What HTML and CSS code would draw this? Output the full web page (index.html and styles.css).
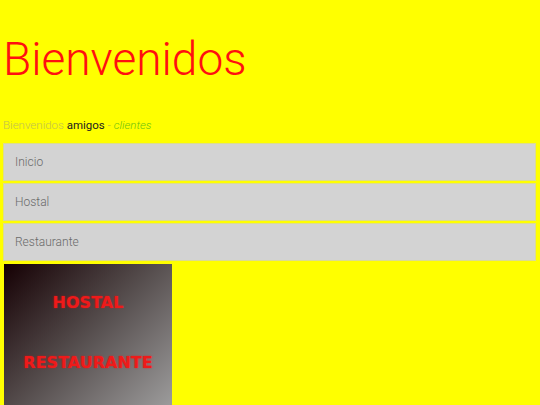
FILE: index.html
```html
<!DOCTYPE html>
<html>
<head>
<meta charset="utf-8">
<link rel="stylesheet" href="styles.css">
</head>
<body>
<header class="header">
  <h1 class="title">Bienvenidos</h1>
  <p class="subtitle"><span class="sub-a">Bienvenidos</span> <span class="sub-b">amigos</span> <span class="sub-c">-</span> <em class="sub-d">clientes</em></p>
</header>
<nav class="menu">
  <div class="menu-item">Inicio</div>
  <div class="menu-item">Hostal</div>
  <div class="menu-item">Restaurante</div>
</nav>
<section class="promo">
  <div class="promo-text">HOSTAL</div>
  <div class="promo-text">RESTAURANTE</div>
</section>
</body>
</html>
```
FILE: styles.css
```css
html, body {
  margin: 0;
  padding: 0;
  background: #ffff00;
  overflow: hidden;
}
body {
  padding: 0 4px 0 3px;
  font-family: Roboto, "Liberation Sans", sans-serif;
}
.title {
  margin: 32px 0 0 0;
  font-size: 46px;
  font-weight: 300;
  color: #ff1010;
  line-height: 54px;
}
.subtitle {
  margin: 32px 0 0 0;
  font-size: 11.5px;
  line-height: 14px;
  font-weight: 300;
}
.sub-a { color: #c2c250; }
.sub-b { color: #222; font-weight: 400; }
.sub-c { color: #a8a860; }
.sub-d { color: #6cbf10; }
.menu {
  margin-top: 11px;
  display: flex;
  flex-direction: column;
  gap: 2px;
}
.menu-item {
  height: 36px;
  border: 1px solid #dcdc90;
  background: #d3d3d3;
  color: #6a6a6a;
  font-size: 12px;
  font-weight: 300;
  line-height: 37px;
  padding-left: 11px;
}
.promo {
  margin: 3px 0 0 1px;
  width: 168px;
  height: 150px;
  background: linear-gradient(135deg, #150003 0%, #585050 50%, #a0a0a0 100%);
  display: flex;
  flex-direction: column;
  align-items: center;
  padding-top: 29px;
  gap: 40px;
  box-sizing: border-box;
}
.promo-text {
  font-family: "DejaVu Sans", sans-serif;
  font-weight: bold;
  font-size: 16px;
  line-height: 20px;
  color: #ee1a1a;
  text-shadow: 0 0 2px rgba(255, 0, 0, 0.6);
}
```
